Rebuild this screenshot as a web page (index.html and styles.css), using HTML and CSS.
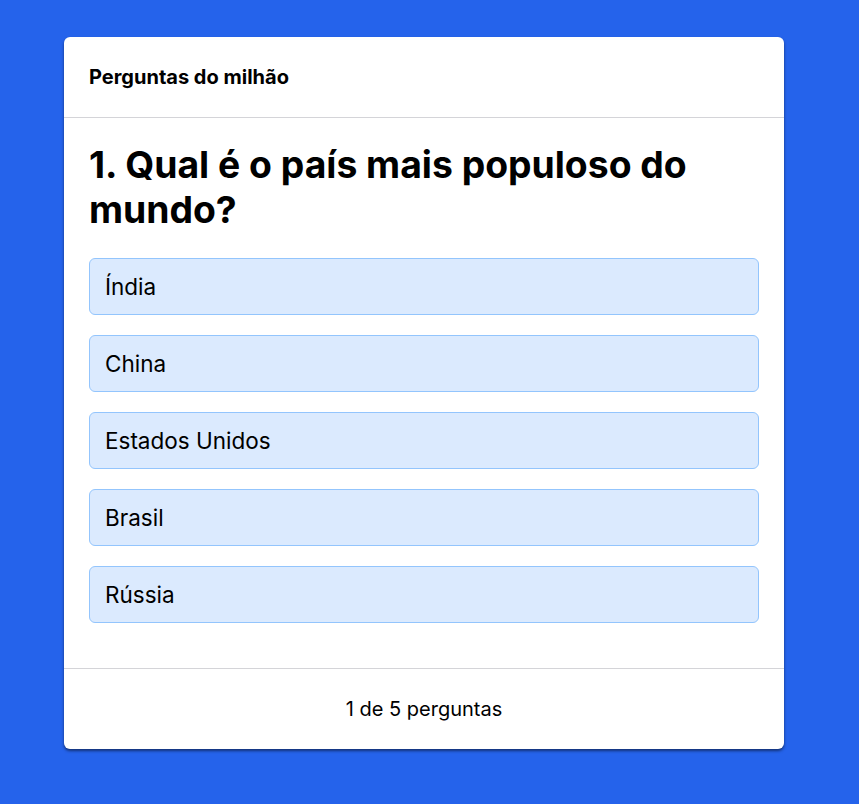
FILE: index.html
```html
<!DOCTYPE html>
<html lang="pt">
<head>
<meta charset="utf-8">
<link rel="stylesheet" href="styles.css">
</head>
<body>
<div class="card">
  <header class="card-header">Perguntas do milhão</header>
  <main class="card-body">
    <h1 class="question">1. Qual é o país mais populoso do mundo?</h1>
    <div class="options">
      <button class="option">Índia</button>
      <button class="option">China</button>
      <button class="option">Estados Unidos</button>
      <button class="option">Brasil</button>
      <button class="option">Rússia</button>
    </div>
  </main>
  <footer class="card-footer">1 de 5 perguntas</footer>
</div>
</body>
</html>
```
FILE: styles.css
```css
* { box-sizing: border-box; }
html, body { margin: 0; padding: 0; }
body {
  background: #2563eb;
  font-family: Inter, "Noto Sans", sans-serif;
  color: #000;
  padding: 37px 75px 56px 64px;
  min-height: 804px;
}
.card {
  width: 720px;
  background: #fff;
  border-radius: 6px;
  box-shadow: 0 2px 3px rgba(0,0,0,0.5);
}
.card-header {
  height: 81px;
  display: flex;
  align-items: center;
  padding: 0 25px;
  font-size: 20px;
  font-weight: 700;
  border-bottom: 1px solid #d4d4d8;
}
.card-body {
  padding: 24px 25px 45px;
}
.question {
  margin: 0 0 26px;
  font-size: 37.3px;
  line-height: 45px;
  font-weight: 700;
}
.options {
  display: flex;
  flex-direction: column;
  gap: 20px;
}
.option {
  display: block;
  width: 100%;
  height: 57px;
  text-align: left;
  padding: 0 15px;
  font-family: inherit;
  font-size: 22.5px;
  color: #000;
  background: #dbeafe;
  border: 1px solid #93c5fd;
  border-radius: 6px;
}
.card-footer {
  height: 81px;
  display: flex;
  align-items: center;
  justify-content: center;
  font-size: 20px;
  border-top: 1px solid #d4d4d8;
}
```
